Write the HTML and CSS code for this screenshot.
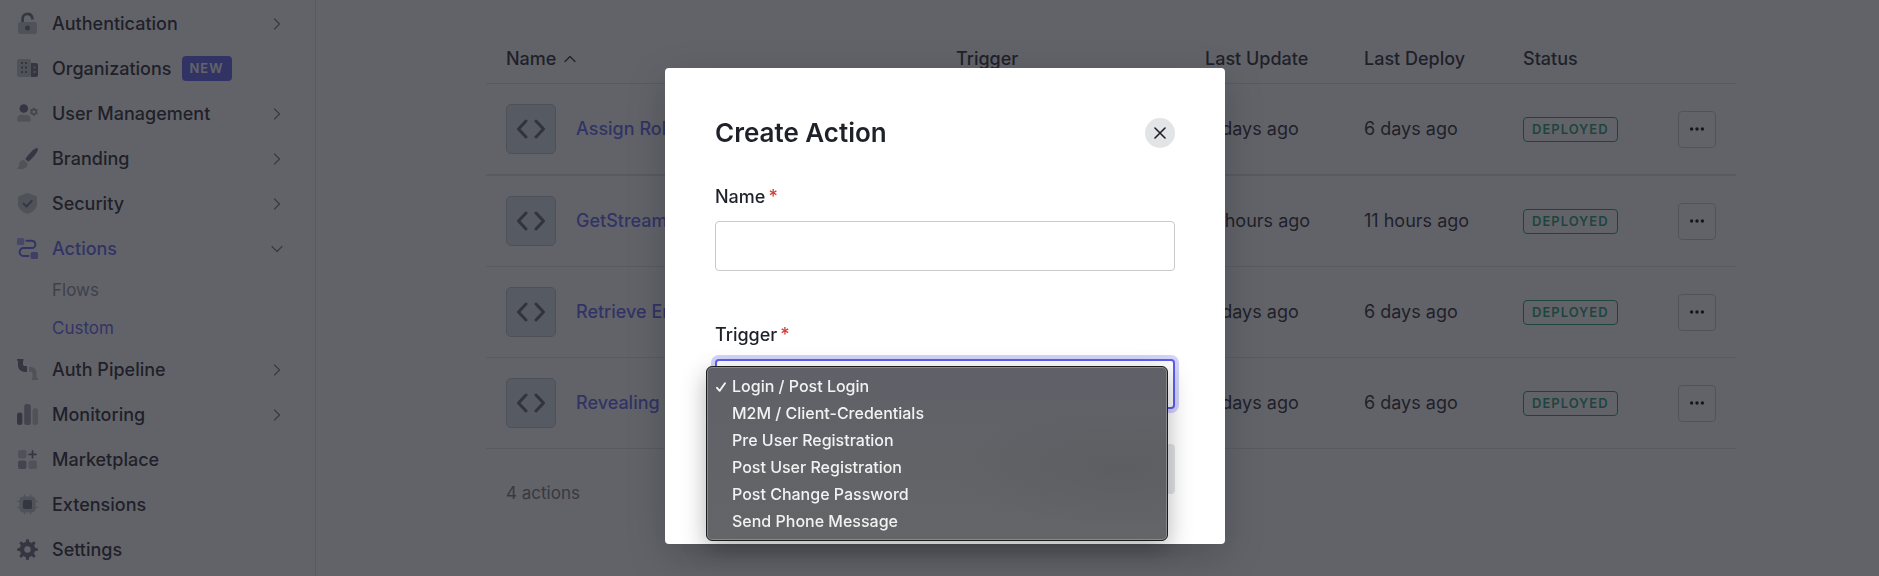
FILE: index.html
```html
<!DOCTYPE html>
<html lang="en">
<head>
<meta charset="utf-8">
<title>Create Action</title>
<link rel="stylesheet" href="styles.css">
</head>
<body>
<svg class="defs" width="0" height="0" aria-hidden="true">
  <symbol id="chevron" viewBox="0 0 12 12"><path d="M3.500 1l5 5-5 5" fill="none" stroke="currentColor" stroke-width="1.300" stroke-linecap="round" stroke-linejoin="round"/></symbol>
  <symbol id="code" viewBox="0 0 30 20"><path d="M10 2L2.500 10l7.500 8M20 2l7.500 8-7.500 8" fill="none" stroke="currentColor" stroke-width="3" stroke-linecap="round" stroke-linejoin="round"/></symbol>
  <symbol id="dots" viewBox="0 0 16 4"><circle cx="2.600" cy="2" r="1.700"/><circle cx="8" cy="2" r="1.700"/><circle cx="13.400" cy="2" r="1.700"/></symbol>
</svg>
<div class="app">
  <nav class="sidebar">
    <a class="item" href="#"><svg class="icon" viewBox="0 0 21 21"><path class="dark-line" d="M5.600 9V5.500a4.900 4.900 0 0 1 9.600-1l.4 2" stroke-width="2.600"/><rect class="light" x="1" y="9" width="19" height="12" rx="2.500"/><circle class="dark" cx="10.500" cy="15" r="2.500"/></svg><span>Authentication</span><svg class="chev"><use href="#chevron"/></svg></a>
    <a class="item" href="#"><svg class="icon" viewBox="0 0 21 21"><rect class="light" x="0" y="1" width="14" height="18" rx="2"/><path class="dark" d="M4 4h2v2H4zM8 4h2v2H8zM4 8.500h2v2H4zM8 8.500h2v2H8zM4 13h2v2H4zM8 13h2v2H8z"/><path class="dark" d="M14 5h5a2 2 0 0 1 2 2v10a2 2 0 0 1-2 2h-5z"/><path class="light" d="M16.500 8.500h2v2h-2zM16.500 13h2v2h-2z"/></svg><span>Organizations</span><span class="new">NEW</span></a>
    <a class="item" href="#"><svg class="icon" viewBox="0 0 21 21"><circle class="dark" cx="6.800" cy="5.500" r="4.300"/><path class="light" d="M0 17c0-3.500 2-5.200 4.500-5.200h4.800c2.500 0 4.500 1.700 4.500 5.200 0 1.200-.6 1.700-1.600 1.700H1.600C.6 18.700 0 18.200 0 17z"/><circle class="mid-line" cx="16.900" cy="8.700" r="2.300" stroke-width="1.600"/><path class="mid-line" stroke-width="1.800" d="M16.900 4.700v1.600M16.900 11.100v1.600M13.400 6.700l1.400.8M19 9.900l1.400.8M13.400 10.700l1.400-.8M19 7.500l1.400-.8"/></svg><span>User Management</span><svg class="chev"><use href="#chevron"/></svg></a>
    <a class="item" href="#"><svg class="icon" viewBox="0 0 21 21"><path class="dark" d="M20.800.2c.6 1.500-1 4.700-3.200 7.300-1.800 2.200-4.500 4.800-6.300 6.300L8.300 11c1.800-2.700 4-5.400 6.200-7.500C16.700 1.500 19.500-.3 20.800.2z"/><path class="light" d="M7 12l3.300 3c.5 3.300-1.600 6-5.300 6H.7c-.8 0-.8-.8-.2-1.100 1.600-.8 1.200-2.200 1.700-4.200C2.800 13.300 4.600 12 7 12z"/></svg><span>Branding</span><svg class="chev"><use href="#chevron"/></svg></a>
    <a class="item" href="#"><svg class="icon" viewBox="0 0 21 21"><path class="light" d="M10.500 0L19 3c.6.200 1 .7 1 1.400V11c0 5-4.500 8.500-9.500 10C5.500 19.500 1 16 1 11V4.400C1 3.700 1.400 3.200 2 3z"/><path class="dark-line" stroke-width="2" stroke-linecap="round" d="M6.500 10.600l3 2.900 5.200-5.700"/></svg><span>Security</span><svg class="chev"><use href="#chevron"/></svg></a>
    <a class="item active" href="#"><svg class="icon" viewBox="0 0 21 21"><rect x="0" y="0" width="7.300" height="7" rx="1.500" fill="#a5a6f2"/><rect x="13.600" y="14" width="7.400" height="7" rx="1.500" fill="#8385f0"/><path d="M9.500 2.700h5.200a3.700 3.700 0 0 1 0 7.400H6.500a3.900 3.900 0 0 0 0 7.800h5" fill="none" stroke="#5c5fee" stroke-width="2" stroke-linecap="round"/></svg><span>Actions</span><svg class="chev down"><use href="#chevron"/></svg></a>
    <a class="subitem" href="#">Flows</a>
    <a class="subitem active" href="#">Custom</a>
    <a class="item" href="#"><svg class="icon" viewBox="0 0 21 21"><path class="dark" d="M0 0h6.500v1.800H6V5c0 1.500.8 2 2.500 2H10v6H8.500C3.500 13 1 10 1 6V1.800H0z"/><path class="light" d="M12 8h1.500c4 0 6 2.500 6 6v5H21v2h-6v-2h.5v-4c0-1.800-.8-2.500-2.500-2.500h-1z"/></svg><span>Auth Pipeline</span><svg class="chev"><use href="#chevron"/></svg></a>
    <a class="item" href="#"><svg class="icon" viewBox="0 0 21 21"><rect class="dark" x="0" y="8.500" width="5.400" height="12.500" rx="2.500"/><rect class="mid" x="7.200" y="0" width="6.600" height="21" rx="2.500"/><rect class="light" x="15.600" y="4.200" width="5.400" height="16.800" rx="2.500"/></svg><span>Monitoring</span><svg class="chev"><use href="#chevron"/></svg></a>
    <a class="item" href="#"><svg class="icon" viewBox="0 0 21 21"><rect class="light" x="1" y="1" width="8.500" height="8.500" rx="2"/><rect class="mid" x="1" y="11.500" width="8.500" height="8.500" rx="2"/><rect class="light" x="11.500" y="11.500" width="8.500" height="8.500" rx="2"/><path class="dark-line" stroke-width="1.800" stroke-linecap="round" d="M15.500 2v6.800M12.100 5.400h6.800"/></svg><span>Marketplace</span></a>
    <a class="item" href="#"><svg class="icon" viewBox="0 0 21 21"><rect class="light" x="2.500" y="2.500" width="16" height="16" rx="4"/><path class="light-line" stroke-width="1.500" stroke-linecap="round" d="M7.400 1v19M13.600 1v19M1 7.400h19M1 13.600h19"/><rect class="dark" x="6" y="6" width="9" height="9" rx="1.500"/></svg><span>Extensions</span></a>
    <a class="item" href="#"><svg class="icon" viewBox="0 0 21 21"><circle class="dark-line" cx="10.500" cy="10.500" r="5.500" stroke-width="4.600"/><path class="dark-line" stroke-width="3.200" stroke-linecap="round" d="M10.500 1.600v2M10.500 17.400v2M1.600 10.500h2M17.400 10.500h2M4.200 4.200l1.400 1.400M15.400 15.400l1.400 1.400M4.200 16.800l1.400-1.400M15.400 5.600l1.400-1.400"/></svg><span>Settings</span></a>
  </nav>
  <main class="main">
    <table class="actions">
      <colgroup><col><col class="c-trigger"><col class="c-date"><col class="c-date"><col class="c-status"><col class="c-menu"></colgroup>
      <thead>
        <tr><th><span class="sort">Name <svg class="chev up"><use href="#chevron"/></svg></span></th><th>Trigger</th><th>Last Update</th><th>Last Deploy</th><th>Status</th><th></th></tr>
      </thead>
      <tbody>
        <tr><td><div class="name"><span class="code"><svg><use href="#code"/></svg></span><a href="#">Assign Roles</a></div></td><td></td><td>6 days ago</td><td>6 days ago</td><td><span class="badge">DEPLOYED</span></td><td><button class="more" aria-label="More"><svg><use href="#dots"/></svg></button></td></tr>
        <tr><td><div class="name"><span class="code"><svg><use href="#code"/></svg></span><a href="#">GetStream</a></div></td><td></td><td>11 hours ago</td><td>11 hours ago</td><td><span class="badge">DEPLOYED</span></td><td><button class="more" aria-label="More"><svg><use href="#dots"/></svg></button></td></tr>
        <tr><td><div class="name"><span class="code"><svg><use href="#code"/></svg></span><a href="#">Retrieve Email</a></div></td><td></td><td>6 days ago</td><td>6 days ago</td><td><span class="badge">DEPLOYED</span></td><td><button class="more" aria-label="More"><svg><use href="#dots"/></svg></button></td></tr>
        <tr><td><div class="name"><span class="code"><svg><use href="#code"/></svg></span><a href="#">Revealing User</a></div></td><td></td><td>6 days ago</td><td>6 days ago</td><td><span class="badge">DEPLOYED</span></td><td><button class="more" aria-label="More"><svg><use href="#dots"/></svg></button></td></tr>
      </tbody>
    </table>
    <p class="count">4 actions</p>
  </main>
</div>
<div class="scrim">
  <form class="modal" role="dialog" aria-labelledby="title">
    <header class="modal-head">
      <h1 id="title">Create Action</h1>
      <button class="close" type="button" aria-label="Close"><svg viewBox="0 0 12 12"><path d="M1 1l10 10M11 1L1 11" fill="none" stroke="currentColor" stroke-width="1.600" stroke-linecap="round"/></svg></button>
    </header>
    <div class="field">
      <label for="name">Name<span class="req">*</span></label>
      <input id="name" type="text">
    </div>
    <div class="field">
      <label for="trigger">Trigger<span class="req">*</span></label>
      <select id="trigger"><option>Login / Post Login</option></select>
      <ul class="menu" role="listbox">
        <li role="option" aria-selected="true"><svg class="check" viewBox="0 0 10 10"><path d="M1 5.800l2.700 3L9 1.200" fill="none" stroke="currentColor" stroke-width="1.900" stroke-linecap="round" stroke-linejoin="round"/></svg>Login / Post Login</li>
        <li role="option">M2M / Client-Credentials</li>
        <li role="option">Pre User Registration</li>
        <li role="option">Post User Registration</li>
        <li role="option">Post Change Password</li>
        <li role="option">Send Phone Message</li>
      </ul>
    </div>
    <footer class="modal-foot"><button class="create" type="submit" aria-label="Create" disabled></button></footer>
  </form>
</div>
</body>
</html>
```
FILE: styles.css
```css
* { box-sizing: border-box; }

body {
  margin: 0;
  height: 100vh;
  overflow: hidden;
  background: #fff;
  color: #1e212a;
  font: 400 18px/24px Inter, "Liberation Sans", sans-serif;
}

a { color: inherit; text-decoration: none; }
button, input, select { font: inherit; color: inherit; }
.defs { position: absolute; }

.app { display: flex; height: 100vh; }

/* Sidebar */
.sidebar {
  flex: none;
  width: 316px;
  padding-top: 1px;
  border-right: 1px solid #dfe0e4;
  overflow: hidden;
}
.item {
  display: flex;
  align-items: center;
  height: 45px;
  padding: 0 32px 0 17px;
  font-weight: 500;
}
.icon { width: 21px; height: 21px; margin-right: 14px; overflow: visible; }
.dark { fill: #676a7a; }
.mid { fill: #969ca3; }
.light { fill: #bec5ca; }
.dark-line, .mid-line, .light-line { fill: none; stroke: #676a7a; }
.mid-line { stroke: #969ca3; }
.light-line { stroke: #bec5ca; }
.chev { width: 12px; height: 12px; color: #73767f; }
.item .chev { margin-left: auto; }
.chev.down { transform: rotate(90deg); }
.chev.up { transform: rotate(-90deg); color: #1e212a; }
.active { color: #5c5fee; }
.subitem {
  display: flex;
  align-items: center;
  height: 38px;
  padding-left: 52px;
  font-size: 17px;
  color: #888c94;
}
.subitem.active { color: #5c5fee; }
.new {
  margin-left: 10px;
  padding: 0 8px;
  border-radius: 4px;
  background: #5c5fee;
  color: #fff;
  font-size: 13px;
  font-weight: 600;
  line-height: 25px;
  letter-spacing: 1px;
}

/* Actions table */
.main { flex: 1; padding: 35px 143px 0 170px; }
.actions {
  width: 100%;
  table-layout: fixed;
  border-collapse: separate;
  border-spacing: 0;
}
.c-trigger { width: 249px; }
.c-date { width: 159px; }
.c-status { width: 155px; }
.c-menu { width: 78px; }
th, td {
  padding: 0 0 0 20px;
  border-bottom: 1px solid #dfe0e4;
  text-align: left;
}
th { height: 49px; font-weight: 500; }
td { height: 91px; }
tbody tr:first-child td { height: 92px; border-bottom-width: 2px; }
.sort, .name { display: flex; align-items: center; }
.sort { gap: 8px; }
.name { gap: 20px; font-weight: 500; color: #5c5fee; }
.code {
  display: flex;
  align-items: center;
  justify-content: center;
  width: 50px;
  height: 50px;
  border: 1px solid #b7c0c8;
  border-radius: 5px;
  background: #d8e0ea;
  color: #5c606c;
}
.code svg { width: 30px; height: 20px; }
.badge {
  display: inline-block;
  padding: 0 8px;
  border: 1px solid #189b71;
  border-radius: 4px;
  color: #189b71;
  font-size: 13px;
  font-weight: 600;
  line-height: 23px;
  letter-spacing: 1px;
  vertical-align: middle;
}
.more {
  display: flex;
  align-items: center;
  justify-content: center;
  width: 38px;
  height: 37px;
  padding: 0;
  border: 1px solid #c9cace;
  border-radius: 4px;
  background: #fff;
}
.more svg { width: 16px; height: 4px; }
.count { margin: 32px 20px; font-size: 17px; color: #6f727b; }

/* Dialog */
.scrim {
  position: fixed;
  inset: 0;
  display: flex;
  justify-content: center;
  align-items: flex-start;
  padding: 68px 0 32px 11px;
  background: rgba(32, 33, 41, .7);
}
.modal {
  width: 560px;
  padding: 50px;
  border-radius: 4px;
  background: #fff;
  box-shadow: 0 12px 40px rgba(0, 0, 0, .2);
}
.modal-head {
  display: flex;
  align-items: center;
  justify-content: space-between;
  margin-bottom: 37px;
}
h1 { margin: 0; font-size: 26px; font-weight: 600; line-height: 30px; }
.close {
  display: flex;
  align-items: center;
  justify-content: center;
  width: 30px;
  height: 30px;
  padding: 0;
  border: 0;
  border-radius: 50%;
  background: #e3e4e6;
}
.close svg { width: 12px; height: 12px; }
.field { position: relative; margin-bottom: 52px; }
.field label { display: block; margin-bottom: 12px; font-weight: 500; }
.req { margin-left: 3px; color: #d03c38; }
.field input, .field select {
  display: block;
  width: 100%;
  height: 50px;
  padding: 0 16px;
  border: 1px solid #c9cace;
  border-radius: 4px;
  background: #fff;
}
.field select {
  appearance: none;
  border: 2px solid #5c5fee;
  box-shadow: 0 0 0 4px #d3d3fb;
}
.menu {
  position: absolute;
  top: 43px;
  left: -9px;
  right: 7px;
  margin: 0;
  padding: 6px 5px 5px;
  border: 1px solid #1c1c1e;
  border-radius: 6px;
  background: radial-gradient(ellipse 170px 60px at 90% 58%, #5d5e61, transparent), linear-gradient(#606168, #646567);
  box-shadow: inset 0 0 0 1px #88898b, 0 8px 24px rgba(0, 0, 0, .3);
  color: #f2f2f3;
  font-size: 16px;
  font-weight: 500;
  line-height: 27px;
  list-style: none;
}
.menu li { position: relative; padding-left: 20px; }
.check { position: absolute; top: 9px; left: 4px; width: 10px; height: 10px; }
.modal-foot { display: flex; justify-content: flex-end; margin-top: -17px; }
.create {
  width: 96px;
  height: 50px;
  border: 0;
  border-radius: 4px;
  background: #e3e4e6;
}
```
